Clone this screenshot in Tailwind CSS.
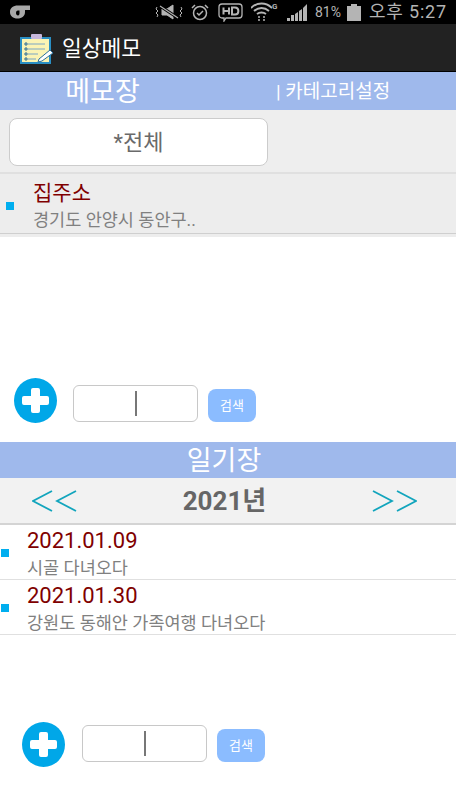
<!DOCTYPE html>
<html lang="ko">
<head>
    <meta charset="UTF-8">
    <meta name="viewport" content="width=device-width, initial-scale=1.0">
    <title>일상메모</title>
    <script src="https://cdn.jsdelivr.net/npm/@tailwindcss/browser@4"></script>
</head>
<body class="bg-white overflow-hidden font-['Roboto','Noto_Sans_CJK_KR',sans-serif]">
    <div class="w-[456px] h-[800px] flex flex-col">
        <!-- Status bar -->
        <div class="h-[24px] bg-black flex items-center text-[#b4b4b4] shrink-0">
            <svg class="ml-[10px] w-[20px] h-[14px] -mt-[1px]" viewBox="0 0 20 14"><path d="M20 .500H8C3 .500 0 3 0 7s3 6.500 7.500 6.500S15 11 15 7V5h5z" fill="#a8a8a8"/><path d="M9.500 5.500H8C6.500 5.500 6 6.500 6 8s.8 2.500 2 2.500c1 0 1.500-1 1.500-2.500z" fill="#000"/></svg>
            <svg class="ml-[124px] w-[30px] h-[16px]" viewBox="0 0 30 16" fill="none" stroke="#b4b4b4"><path d="M8 5h5l6-4v14l-6-4H8z" fill="#b4b4b4"/><path d="M6 2l18 12" stroke="#000" stroke-width="3"/><path d="M6 2l18 12" stroke-width="1.200"/><path d="M3 3L2 5l2 2-2 2 2 2-1 2M27 3l1 2-2 2 2 2-2 2 1 2"/></svg>
            <svg class="ml-[7px] w-[18px] h-[18px]" viewBox="0 0 18 18" fill="none" stroke="#b4b4b4" stroke-width="1.500"><circle cx="9" cy="10" r="6.500"/><path d="M6 10l2 2 4-4M1 5l3-3M17 5l-3-3"/></svg>
            <svg class="ml-[9px] w-[25px] h-[19px]" viewBox="0 0 25 19" fill="none" stroke="#b4b4b4" stroke-width="1.300"><path d="M4 1h17a3 3 0 0 1 3 3v8a3 3 0 0 1-3 3H8l-2 3v-3H4a3 3 0 0 1-3-3V4a3 3 0 0 1 3-3z"/><path d="M5.500 4.500v7M11 4.500v7M5.500 8h5.500M14 4.500v7h3c4.500 0 4.500-7 0-7z" stroke-width="2"/></svg>
            <svg class="ml-[8px] w-[21px] h-[20px]" viewBox="0 0 21 20" fill="none" stroke="#b4b4b4" stroke-width="1.800"><path d="M0 6c6-6 15-6 21 0M3 9c4.500-4 10.500-4 15 0M6 12c2.500-2 6.500-2 9 0"/><path d="M8 14v5M13 14v5" stroke-width="1.500" stroke-dasharray="2 1"/></svg>
            <span class="text-[8px] font-bold w-[6px] -mt-[10px] leading-none">G</span>
            <svg class="ml-[9px] w-[20px] h-[17px]" viewBox="0 0 20 17" fill="#b4b4b4"><path d="M0 17h3v-3H0zM4 17h3v-6H4zM8 17h3V8L8 10zM12 17h3V5l-3 2zM16 17h4V0l-4 4z"/></svg>
            <span class="ml-[8px] text-[14px] leading-none w-[28px] whitespace-nowrap">81%</span>
            <div class="ml-[4px] w-[14px] h-[15px] bg-[#b4b4b4] relative mt-[3px]"><div class="absolute -top-[2px] left-[4px] w-[6px] h-[2px] bg-[#b4b4b4]"></div></div>
            <span class="ml-[8px] text-[18px] tracking-[0.8px] leading-none whitespace-nowrap">오후 5:27</span>
        </div>

        <!-- Action bar -->
        <div class="h-[48px] bg-[#222222] flex items-center border-b border-black shrink-0">
            <svg class="ml-[19px] w-[35px] h-[30px] mt-[2px]" viewBox="0 0 35 30">
                <rect x="1" y="3" width="31" height="27" fill="#2a8fc4"/>
                <rect x="3" y="5" width="27" height="23" fill="#fbf4b4"/>
                <rect x="12" y="0" width="11" height="5" rx="1" fill="#c8b8dc"/>
                <path d="M9 10h17M9 15h17M9 20h10M9 25h8" stroke="#7aa6c4" stroke-width="1"/>
                <path d="M6 9h2v2H6zM6 14h2v2H6zM6 19h2v2H6zM6 24h2v2H6z" fill="none" stroke="#2c6d96" stroke-width="1"/>
                <path d="M20 25l11-9 3 3-11 8-4 1z" fill="#fff" stroke="#2a6f9c" stroke-width="1"/>
            </svg>
            <span class="ml-[8px] mt-[3px] text-white text-[21.500px] leading-none">일상메모</span>
        </div>

        <!-- Memo header -->
        <div class="h-[38px] bg-[#9fb9ec] flex items-center text-white shrink-0">
            <div class="w-[205px] mt-[2px] text-center text-[27px] leading-none">메모장</div>
            <div class="ml-[71px] mt-[1px] text-[19px] leading-none whitespace-nowrap">| 카테고리설정</div>
        </div>

        <!-- Category -->
        <div class="h-[64px] bg-[#eeeeee] border-b-2 border-[#e0e0e0] px-[9px] pt-[8px] shrink-0">
            <div class="w-[259px] h-[48px] bg-white border border-[#cccccc] rounded-[8px] flex items-center justify-center text-[22px] text-[#6a6a6a]">*전체</div>
        </div>

        <!-- Memo list -->
        <div class="bg-[#ededed] h-[63px] shrink-0">
            <div class="h-[60px] border-b border-[#cfcfcf] flex items-center">
                <div class="ml-[6px] w-[8px] h-[8px] bg-[#00aeef] mt-[4px]"></div>
                <div class="ml-[19px] pt-[6px]">
                    <div class="text-[21px] leading-[28px] text-[#800000]">집주소</div>
                    <div class="text-[17.500px] leading-[27px] text-[#808080]">경기도 안양시 동안구..</div>
                </div>
            </div>
        </div>

        <div class="h-[141px] shrink-0"></div>

        <!-- Memo search -->
        <div class="h-[45px] flex items-end pl-[14px] shrink-0">
            <svg class="w-[43px] h-[45px]" viewBox="0 0 43 45"><ellipse cx="21.500" cy="22.500" rx="21.500" ry="22.500" fill="#00a7e8"/><path d="M17 12a2 2 0 0 1 2-2h5a2 2 0 0 1 2 2v6h7a2 2 0 0 1 2 2v5a2 2 0 0 1-2 2h-7v6a2 2 0 0 1-2 2h-5a2 2 0 0 1-2-2v-6h-7a2 2 0 0 1-2-2v-5a2 2 0 0 1 2-2h7z" fill="#fff"/></svg>
            <div class="ml-[16px] mb-[1px] w-[125px] h-[37px] bg-white border border-[#c8c8c8] rounded-[6px] flex items-center justify-center"><div class="w-[2px] h-[25px] bg-[#777777]"></div></div>
            <div class="ml-[10px] mb-[1px] w-[48px] h-[33px] bg-[#8bbcff] rounded-[8px] flex items-center justify-center text-white text-[13px]">검색</div>
        </div>

        <div class="h-[19px] shrink-0"></div>

        <!-- Diary header -->
        <div class="h-[36px] bg-[#9fb9ec] flex items-center justify-center pr-[8px] text-white text-[27px] leading-none shrink-0"><span class="mt-[2px]">일기장</span></div>

        <!-- Year nav -->
        <div class="h-[47px] bg-[#f2f2f2] border-b-2 border-[#d4d4d4] flex items-center justify-between pl-[32px] pr-[39px] shrink-0">
            <svg class="w-[45px] h-[22px]" viewBox="0 0 45 22" fill="none" stroke="#12a5bd" stroke-width="1.800"><path d="M20 1L1 11l19 10M44 1L25 11l19 10"/></svg>
            <span class="text-[26px] font-bold text-[#666666] leading-none">2021년</span>
            <svg class="w-[45px] h-[22px]" viewBox="0 0 45 22" fill="none" stroke="#12a5bd" stroke-width="1.800"><path d="M1 1l19 10L1 21M25 1l19 10-19 10"/></svg>
        </div>

        <!-- Diary list -->
        <div class="h-[55px] border-b border-[#e0e0e0] flex items-center shrink-0">
            <div class="ml-[1px] w-[8px] h-[8px] bg-[#00aeef] mt-[2px]"></div>
            <div class="ml-[18px] pt-[2px]">
                <div class="text-[22px] leading-[29px] text-[#800000]">2021.01.09</div>
                <div class="text-[17.500px] leading-[26px] text-[#808080]">시골 다녀오다</div>
            </div>
        </div>
        <div class="h-[55px] border-b border-[#e0e0e0] flex items-center shrink-0">
            <div class="ml-[1px] w-[8px] h-[8px] bg-[#00aeef] mt-[2px]"></div>
            <div class="ml-[18px] pt-[2px]">
                <div class="text-[22px] leading-[29px] text-[#800000]">2021.01.30</div>
                <div class="text-[17.500px] leading-[26px] text-[#808080]">강원도 동해안 가족여행 다녀오다</div>
            </div>
        </div>

        <div class="h-[87px] shrink-0"></div>

        <!-- Diary search -->
        <div class="h-[45px] flex items-end pl-[22px] shrink-0">
            <svg class="w-[43px] h-[45px]" viewBox="0 0 43 45"><ellipse cx="21.500" cy="22.500" rx="21.500" ry="22.500" fill="#00a7e8"/><path d="M17 12a2 2 0 0 1 2-2h5a2 2 0 0 1 2 2v6h7a2 2 0 0 1 2 2v5a2 2 0 0 1-2 2h-7v6a2 2 0 0 1-2 2h-5a2 2 0 0 1-2-2v-6h-7a2 2 0 0 1-2-2v-5a2 2 0 0 1 2-2h7z" fill="#fff"/></svg>
            <div class="ml-[17px] mb-[5px] w-[125px] h-[37px] bg-white border border-[#c8c8c8] rounded-[6px] flex items-center justify-center"><div class="w-[2px] h-[25px] bg-[#777777]"></div></div>
            <div class="ml-[10px] mb-[5px] w-[48px] h-[33px] bg-[#8bbcff] rounded-[8px] flex items-center justify-center text-white text-[13px]">검색</div>
        </div>
    </div>
</body>
</html>
